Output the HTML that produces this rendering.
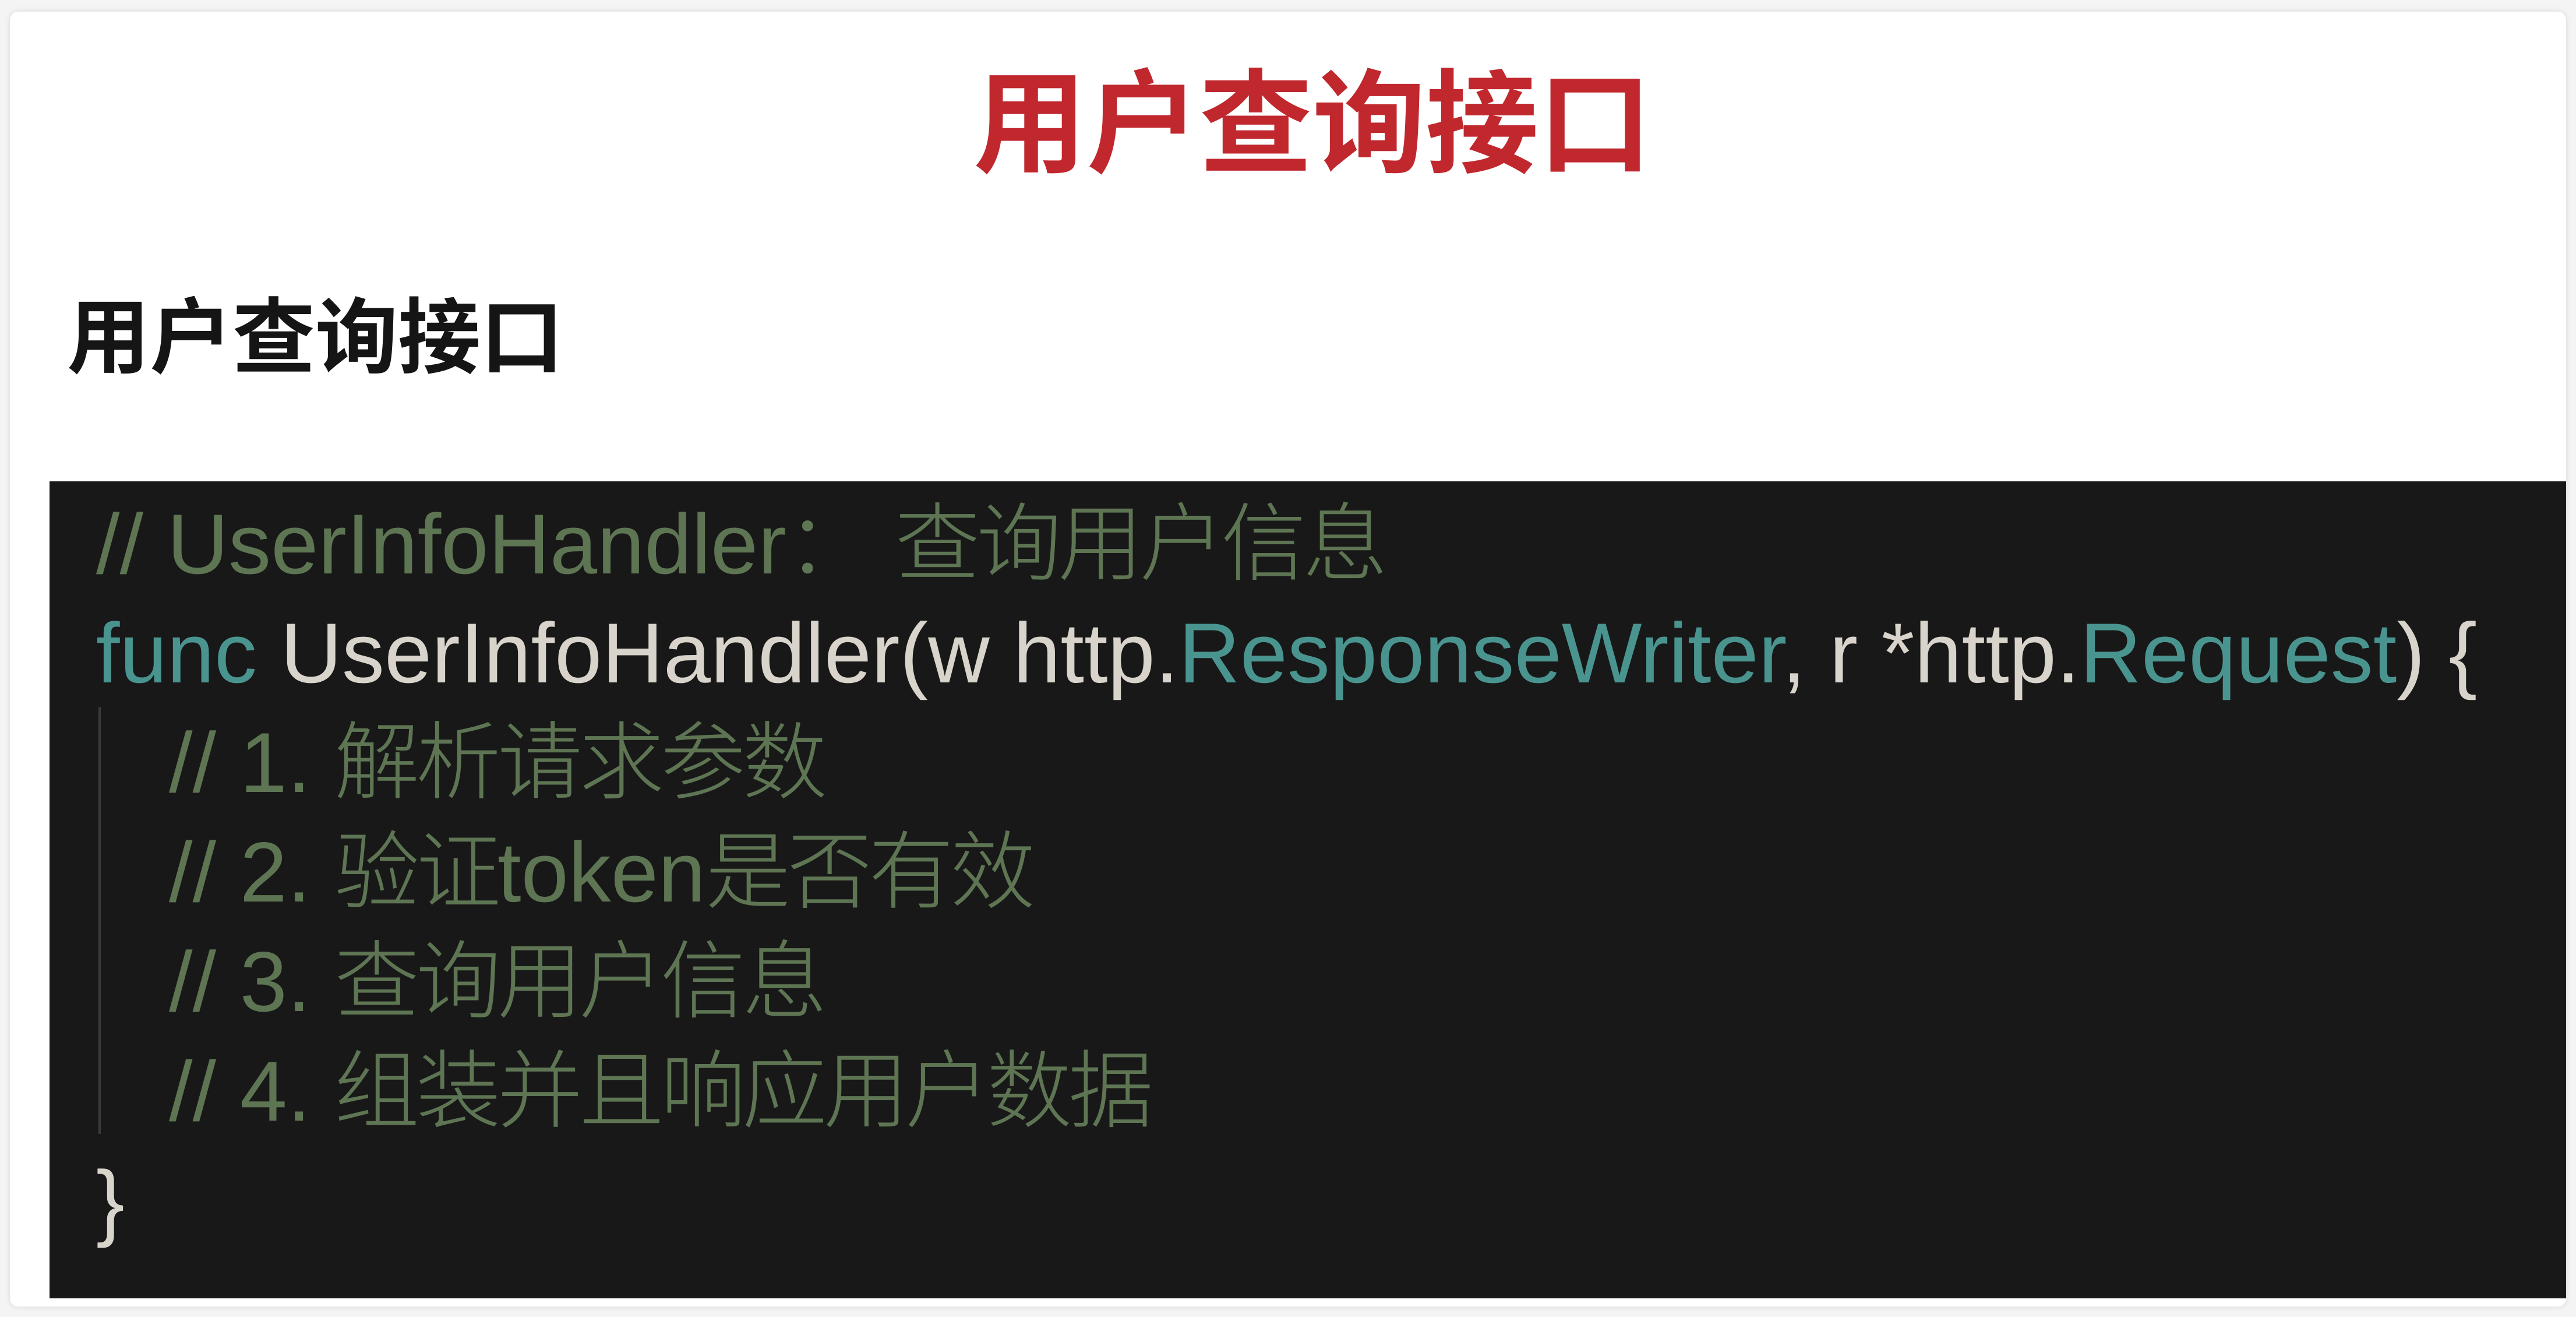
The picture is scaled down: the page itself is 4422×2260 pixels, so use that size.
<!DOCTYPE html>
<html><head><meta charset="utf-8"><style>
html,body{margin:0;padding:0;width:4422px;height:2260px;background:#f4f4f4;overflow:hidden}
.card{position:absolute;left:17px;top:20px;width:4388px;height:2222px;background:#fff;border-radius:14px;box-shadow:0 0 10px rgba(0,0,0,.12)}
.t1{position:absolute;left:42px;width:4422px;top:118px;text-align:center;font:bold 194px/1 "Liberation Sans","Noto Sans CJK SC",sans-serif;color:#c0282e}
.t2{position:absolute;left:115px;top:510px;font:bold 142px/1 "Liberation Sans","Noto Sans CJK SC",sans-serif;color:#151515}
.code{position:absolute;left:85px;top:826px;width:4320px;height:1402px;background:#181818}
.ln{position:absolute;left:80px;white-space:pre;font:300 146px/1 "Liberation Sans","Noto Sans CJK SC",sans-serif;letter-spacing:0px;color:#d8d4cc}
.c{color:#5e7553}.k{color:#4a9490}.ty{color:#4a9490}
.cj{letter-spacing:-6px}
.guide{position:absolute;left:84px;top:387px;width:4px;height:733px;background:#3a3a3a}
</style></head><body>
<div class="card"></div>
<div class="t1">用户查询接口</div>
<div class="t2">用户查询接口</div>
<div class="code">
<div class="guide"></div>
<div class="ln c" style="top:35px">// UserInfoHandler：&nbsp;<span class="cj">查询用户信息</span></div>
<div class="ln" style="top:222px"><span class="k">func</span> UserInfoHandler(w http.<span class="ty">ResponseWriter</span>, r *http.<span class="ty">Request</span>) {</div>
<div class="ln c" style="top:410px;left:205px">// 1. <span class="cj">解析请求参数</span></div>
<div class="ln c" style="top:598px;left:205px">// 2. <span class="cj">验证</span>token<span class="cj">是否有效</span></div>
<div class="ln c" style="top:786px;left:205px">// 3. <span class="cj">查询用户信息</span></div>
<div class="ln c" style="top:974px;left:205px">// 4. <span class="cj">组装并且响应用户数据</span></div>
<div class="ln" style="top:1162px">}</div>
</div>
</body></html>
